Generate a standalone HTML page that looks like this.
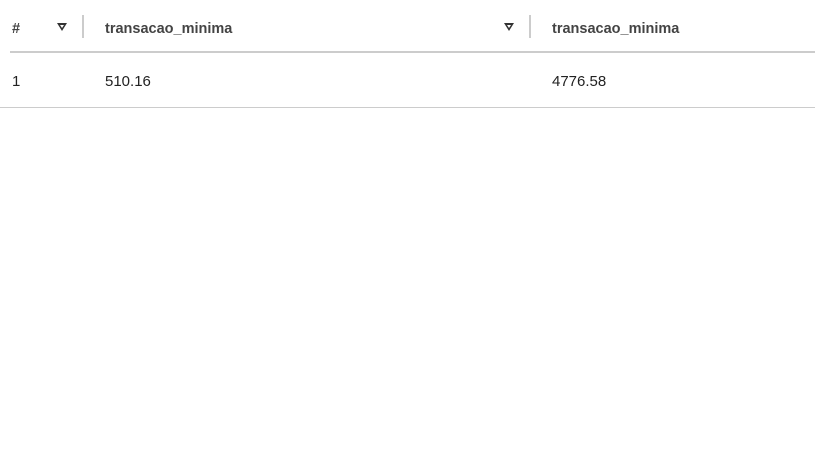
<!DOCTYPE html>
<html><head><style>
body{margin:0;width:819px;height:460px;background:#fff;font-family:"Liberation Sans",sans-serif;color:#333;position:relative;overflow:hidden}
.t{position:absolute;font-size:15px;line-height:18px;white-space:nowrap}
.h{font-weight:bold;color:#444;font-size:14.5px}
.tri{position:absolute;width:0;height:0;border-left:5px solid transparent;border-right:5px solid transparent;border-top:8px solid #333}
.tri:after{content:"";position:absolute;left:-2px;top:-6px;border-left:2px solid transparent;border-right:2px solid transparent;border-top:3px solid #fff}
.div{position:absolute;width:2px;height:23px;top:15px;background:#ccc}
.line{position:absolute;height:2px;background:#ccc}
</style></head><body>
<div class="t h" style="left:12px;top:20px">#</div>
<div class="tri" style="left:57px;top:23px"></div>
<div class="div" style="left:82px"></div>
<div class="t h" style="left:105px;top:20px">transacao_minima</div>
<div class="tri" style="left:504px;top:23px"></div>
<div class="div" style="left:529px"></div>
<div class="t h" style="left:552px;top:20px">transacao_minima</div>
<div class="line" style="left:10px;top:51px;width:805px"></div>
<div class="t" style="left:12px;top:73px;color:#222">1</div>
<div class="t" style="left:105px;top:73px;color:#222">510.16</div>
<div class="t" style="left:552px;top:73px;color:#222">4776.58</div>
<div class="line" style="left:0;top:107px;width:815px;height:1px"></div>
</body></html>
